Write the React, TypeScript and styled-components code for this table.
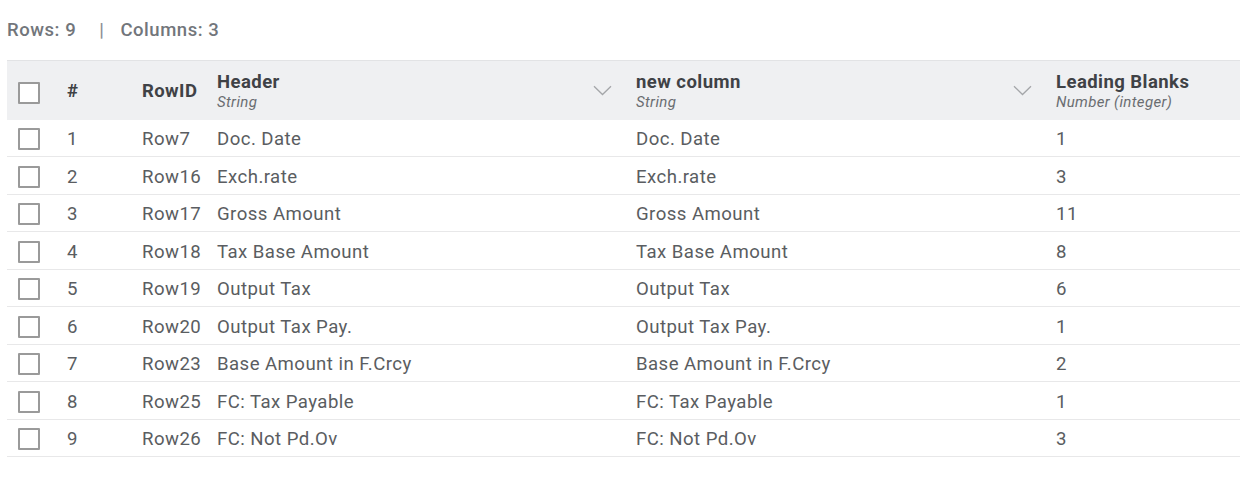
import React from "react";
import styled, { createGlobalStyle } from "styled-components";

const Global = createGlobalStyle`
  html, body { margin: 0; padding: 0; background: #ffffff; }
  body { font-family: Roboto, "Noto Sans", Arial, sans-serif; overflow: hidden; }
`;

const Page = styled.div`
  width: 1240px;
  height: 498px;
  padding-left: 7px;
  box-sizing: border-box;
  display: flex;
  flex-direction: column;
`;

const InfoBar = styled.div`
  height: 60px;
  display: flex;
  align-items: center;
  font-size: 18.5px;
  letter-spacing: 0.55px;
  font-weight: 500;
  color: #72767b;
  padding-bottom: 1px;
  box-sizing: border-box;
`;

const Sep = styled.span`
  margin: 0 16px 0 23px;
  color: #8a8d91;
`;

const Table = styled.div`
  display: flex;
  flex-direction: column;
`;

const COLS = "50px 75px 75px 419px 420px 1fr";

const HeaderRow = styled.div`
  display: grid;
  grid-template-columns: ${COLS};
  height: 59.5px;
  background: #eff0f2;
  border-top: 1px solid #e2e3e5;
  box-sizing: border-box;
  align-items: center;
`;

const Row = styled.div`
  display: grid;
  grid-template-columns: ${COLS};
  height: 37.5px;
  border-bottom: 1px solid #e8e8e9;
  box-sizing: border-box;
  align-items: center;
`;

const Cell = styled.div<{ $pad?: number }>`
  padding-left: ${(p) => p.$pad ?? 10}px;
  padding-top: 3px;
  font-size: 18.6px;
  letter-spacing: 0.45px;
  color: #5a5d61;
  white-space: nowrap;
  overflow: hidden;
`;

const BoxCell = styled.div<{ $top: number }>`
  padding-left: 11px;
  padding-top: ${(p) => p.$top}px;
  display: flex;
  align-items: center;
`;

const HeadCell = styled.div<{ $pad?: number }>`
  padding-left: ${(p) => p.$pad ?? 10}px;
  padding-right: 14px;
  display: flex;
  align-items: center;
  justify-content: space-between;
  min-width: 0;
`;

const HeadPlain = styled.span`
  font-size: 18.5px;
  letter-spacing: 0.4px;
  font-weight: 700;
  color: #3f4246;
  padding-top: 2px;
`;

const HeadStack = styled.div`
  display: flex;
  flex-direction: column;
  padding-top: 4px;
`;

const HeadTitle = styled.span`
  font-size: 18.5px;
  letter-spacing: 0.45px;
  font-weight: 700;
  color: #3f4246;
  line-height: 21px;
`;

const HeadType = styled.span`
  font-size: 15px;
  letter-spacing: 0.35px;
  font-style: italic;
  color: #6a6d71;
  line-height: 19px;
`;

const Box = styled.span`
  display: block;
  width: 22px;
  height: 22px;
  border: 2px solid #9a9a9a;
  border-radius: 1px;
  box-sizing: border-box;
  background: #fff;
`;

const Chevron = () => (
  <svg width="19" height="11" viewBox="0 0 19 11" fill="none">
    <path d="M1 1.2 L9.5 9.5 L18 1.2" stroke="#a4a6a9" strokeWidth="1.3" />
  </svg>
);

const rows: [string, string, number][] = [
  ["Row7", "Doc. Date", 1],
  ["Row16", "Exch.rate", 3],
  ["Row17", "Gross Amount", 11],
  ["Row18", "Tax Base Amount", 8],
  ["Row19", "Output Tax", 6],
  ["Row20", "Output Tax Pay.", 1],
  ["Row23", "Base Amount in F.Crcy", 2],
  ["Row25", "FC: Tax Payable", 1],
  ["Row26", "FC: Not Pd.Ov", 3],
];

export default function App() {
  return (
    <>
      <Global />
      <Page>
        <InfoBar>
          <span>Rows: 9</span>
          <Sep>|</Sep>
          <span>Columns: 3</span>
        </InfoBar>
        <Table>
          <HeaderRow>
            <BoxCell $top={6}>
              <Box />
            </BoxCell>
            <HeadCell>
              <HeadPlain>#</HeadPlain>
            </HeadCell>
            <HeadCell>
              <HeadPlain>RowID</HeadPlain>
            </HeadCell>
            <HeadCell>
              <HeadStack>
                <HeadTitle>Header</HeadTitle>
                <HeadType>String</HeadType>
              </HeadStack>
              <Chevron />
            </HeadCell>
            <HeadCell>
              <HeadStack>
                <HeadTitle>new column</HeadTitle>
                <HeadType>String</HeadType>
              </HeadStack>
              <Chevron />
            </HeadCell>
            <HeadCell>
              <HeadStack>
                <HeadTitle>Leading Blanks</HeadTitle>
                <HeadType>Number (integer)</HeadType>
              </HeadStack>
            </HeadCell>
          </HeaderRow>
          {rows.map(([id, h, n], i) => (
            <Row key={id}>
              <BoxCell $top={3}>
                <Box />
              </BoxCell>
              <Cell>{i + 1}</Cell>
              <Cell>{id}</Cell>
              <Cell>{h}</Cell>
              <Cell>{h}</Cell>
              <Cell>{n}</Cell>
            </Row>
          ))}
        </Table>
      </Page>
    </>
  );
}
